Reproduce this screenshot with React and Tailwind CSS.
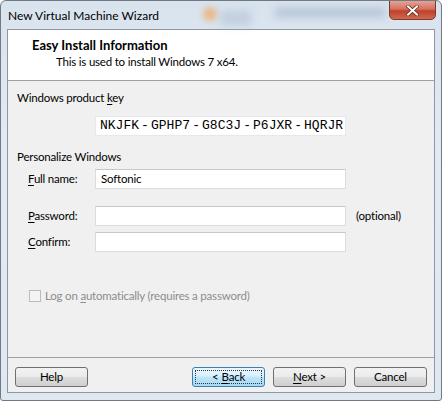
import React from 'react';

const font = { fontFamily: 'Lato, "Noto Sans", sans-serif' };

const Field = ({ value = '' }) => (
  <div className="w-[251px] h-[20px] bg-white border border-[#d9dde2] border-t-[#c4c8ce] flex items-center px-[5px] text-[11.5px] tracking-[-0.2px] text-black">
    {value}
  </div>
);

const Button = ({ children, focused }) => (
  <button
    className={
      focused
        ? 'w-[73px] h-[20px] rounded-[3px] border border-[#3c7fb1] bg-[linear-gradient(#eaf6fd_0%,#d9f0fc_45%,#bee6fd_50%,#a7d9f5_100%)] p-[2px] text-[11.5px] tracking-[-0.2px] text-black'
        : 'w-[73px] h-[20px] rounded-[3px] border border-[#707070] bg-[linear-gradient(#f2f2f2_0%,#ebebeb_48%,#dddddd_52%,#cfcfcf_100%)] text-[11.5px] tracking-[-0.2px] text-black'
    }
  >
    {focused ? (
      <span className="flex h-full w-full items-center justify-center border border-dotted border-[#333]">{children}</span>
    ) : (
      children
    )}
  </button>
);

const keyParts = ['NKJFK', 'GPHP7', 'G8C3J', 'P6JXR', 'HQRJR'];

export default function App() {
  return (
    <div style={font} className="w-[442px] h-[401px] bg-[linear-gradient(180deg,#d9e3ee_0%,#e3eaf3_40%,#dfe7f0_100%)] border border-[#6f7a86] rounded-t-[6px] rounded-b-[3px] flex flex-col px-[6px] overflow-hidden">
      <div className="relative h-[28px] shrink-0 flex items-center">
        <div className="absolute left-[196px] top-[6px] w-[14px] h-[14px] rounded-full bg-[#f0a35c] blur-[3px] opacity-70" />
        <div className="absolute left-[214px] top-[10px] w-[30px] h-[14px] bg-[#aebfd4] blur-[4px] opacity-60" />
        <div className="absolute left-[268px] top-[7px] w-[110px] h-[9px] bg-[#8ea3bf] blur-[4px] opacity-50" />
        <span className="relative pl-[1px] pt-[2px] text-[12px] text-black">New Virtual Machine Wizard</span>
        <div className="absolute right-[-1px] top-[-1px] w-[47px] h-[20px] rounded-b-[5px] border border-[#7a3a32] bg-[linear-gradient(#e6a294_0%,#d4715e_45%,#c0402a_55%,#cf6a4c_100%)] flex items-center justify-center">
          <svg width="13" height="11" viewBox="0 0 13 11">
            <path d="M2 1.5 L11 9.5 M11 1.5 L2 9.5" stroke="#5b2218" strokeWidth="3.4" strokeLinecap="square" />
            <path d="M2 1.5 L11 9.5 M11 1.5 L2 9.5" stroke="#ffffff" strokeWidth="2" strokeLinecap="square" />
          </svg>
        </div>
      </div>

      <div className="flex-1 flex flex-col border border-[#8c98a6] bg-[#f0f0f0]">
        <div className="h-[51px] shrink-0 bg-white border-b border-[#a0a0a0] pl-[24px] pt-[6px] text-black">
          <div className="text-[13px] font-bold leading-[18px]">Easy Install Information</div>
          <div className="pl-[24px] text-[11.5px] tracking-[-0.2px] leading-[16px]">This is used to install Windows 7 x64.</div>
        </div>

        <div className="flex-1 flex flex-col px-[9px] pt-[9px] text-[11.5px] tracking-[-0.2px] text-black">
          <div className="leading-[16px]">
            Windows product <span className="underline underline-offset-2">k</span>ey
          </div>
          <div className="mt-[10px] ml-[78px] w-[251px] h-[20px] bg-white border border-[#e6e8eb] flex items-center pl-[4px] text-[13px] tracking-normal whitespace-nowrap [font-family:'Liberation_Mono',monospace]">
            {keyParts.map((p, i) => (
              <React.Fragment key={p}>
                {i > 0 && <span className="w-[12px] text-center">-</span>}
                <span>{p}</span>
              </React.Fragment>
            ))}
          </div>

          <div className="mt-[13px] leading-[16px]">Personalize Windows</div>
          <div className="mt-[4px] grid grid-cols-[78px_251px_auto] items-center gap-y-[6px]">
            <div className="pl-[11px]"><span className="underline underline-offset-2">F</span>ull name:</div>
            <Field value="Softonic" />
            <div />
          </div>

          <div className="mt-[17px] grid grid-cols-[78px_251px_auto] items-center gap-y-[6px]">
            <div className="pl-[11px]"><span className="underline underline-offset-2">P</span>assword:</div>
            <Field />
            <div className="pl-[10px]">(optional)</div>
            <div className="pl-[11px]"><span className="underline underline-offset-2">C</span>onfirm:</div>
            <Field />
            <div />
          </div>

          <div className="mt-[35px] ml-[12px] flex items-center gap-[4px] text-[#8d8d8d]">
            <div className="w-[12px] h-[12px] border border-[#b8bcc2] bg-[#f4f4f4]" />
            <span>
              Log on <span className="underline underline-offset-2">a</span>utomatically (requires a password)
            </span>
          </div>

          <div className="flex-1" />
        </div>

        <div className="h-[35px] shrink-0 border-t border-[#a0a0a0] flex items-center px-[7px] pt-[3px]">
          <Button>Help</Button>
          <div className="flex-1" />
          <Button focused>
            &lt; <span className="underline underline-offset-2 ml-[3px]">B</span>ack
          </Button>
          <div className="w-[8px]" />
          <Button>
            <span className="underline underline-offset-2">N</span>ext &gt;
          </Button>
          <div className="w-[8px]" />
          <Button>Cancel</Button>
        </div>
      </div>
      <div className="h-[7px] shrink-0" />
    </div>
  );
}
